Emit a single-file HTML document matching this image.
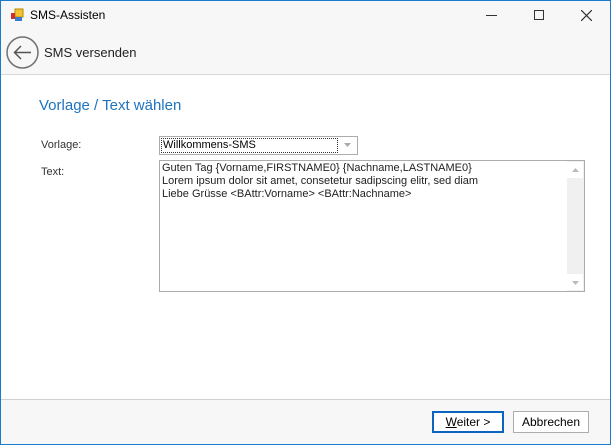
<!DOCTYPE html>
<html><head><style>
*{margin:0;padding:0;box-sizing:border-box}
body{width:611px;height:445px;background:#fff;font-family:"Liberation Sans",Tahoma,sans-serif;font-size:11px;color:#000;position:relative;overflow:hidden}
.win{position:absolute;left:0;top:0;width:611px;height:445px;border:1px solid #1a7acb;z-index:5;pointer-events:none}
.abs{position:absolute}
.title{left:1px;top:1px;width:609px;height:30px;background:#f7f7f7}
.hdr{left:1px;top:31px;width:609px;height:44px;background:#f7f7f7;border-bottom:1px solid #d8d8d8}
.foot{left:1px;top:399px;width:609px;height:45px;background:#f7f7f7;border-top:1px solid #cfcfcf}
.btn{height:22px;border:1px solid #adadad;background:#fff;text-align:center;line-height:20px;font-size:12px}
</style></head><body>
<div class="win"></div>
<div class="abs title"></div>
<svg class="abs" style="left:10px;top:8px" width="14" height="14"><rect x="5" y="1" width="8" height="8" fill="#f4c430" stroke="#b88a00"/><rect x="1" y="5" width="4" height="6" fill="#d03030"/><rect x="5" y="9" width="7" height="4" fill="#3a7ad0"/></svg>
<div class="abs" style="left:30px;top:8px;font-size:12px">SMS-Assisten</div>
<div class="abs" style="left:486px;top:15px;width:11px;height:1px;background:#333"></div>
<div class="abs" style="left:534px;top:10px;width:10px;height:10px;border:1px solid #333"></div>
<svg class="abs" style="left:581px;top:10px" width="11" height="11"><path d="M0 0L11 11M11 0L0 11" stroke="#333" stroke-width="1.2"/></svg>
<div class="abs hdr"></div>
<svg class="abs" style="left:6px;top:36px" width="33" height="33"><circle cx="16.5" cy="16.5" r="15.5" fill="none" stroke="#707070" stroke-width="1.5"/><path d="M25 16.5H9M15 10L8.5 16.5L15 23" fill="none" stroke="#555" stroke-width="1.5"/></svg>
<div class="abs" style="left:44px;top:45px;font-size:13px;color:#222">SMS versenden</div>
<div class="abs" style="left:39px;top:97px;font-size:15px;color:#1e73be">Vorlage / Text wählen</div>
<div class="abs" style="left:41px;top:139px;font-size:11px;color:#333">Vorlage:</div>
<div class="abs" style="left:41px;top:166px;font-size:11px;color:#333">Text:</div>
<div class="abs" style="left:159px;top:136px;width:199px;height:19px;border:1px solid #acacac;background:#fff"></div>
<div class="abs" style="left:161px;top:138px;width:177px;height:15px;border:1px dotted #333;font-size:11px;line-height:13px;padding-left:1px">Willkommens-SMS</div>
<svg class="abs" style="left:344px;top:143px" width="7" height="5"><path d="M0 0H7L3.5 4Z" fill="#aaa"/></svg>
<div class="abs" style="left:159px;top:160px;width:426px;height:132px;border:1px solid #acacac;background:#fff"></div>
<div class="abs" style="left:567px;top:161px;width:17px;height:130px;background:#f0f0f0"></div>
<div class="abs" style="left:567px;top:162px;width:16px;height:16px;background:#fff"></div>
<div class="abs" style="left:567px;top:274px;width:16px;height:16px;background:#fff"></div>
<svg class="abs" style="left:572px;top:168px" width="7" height="4"><path d="M0 4H7L3.5 0Z" fill="#bbb"/></svg>
<svg class="abs" style="left:572px;top:281px" width="7" height="4"><path d="M0 0H7L3.5 4Z" fill="#bbb"/></svg>
<div class="abs" style="left:162px;top:162px;font-size:11px;line-height:13px;color:#222">Guten Tag {Vorname,FIRSTNAME0} {Nachname,LASTNAME0}<br>Lorem ipsum dolor sit amet, consetetur sadipscing elitr, sed diam<br>Liebe Grüsse &lt;BAttr:Vorname&gt; &lt;BAttr:Nachname&gt;</div>
<div class="abs foot"></div>
<div class="abs btn" style="left:432px;top:411px;width:72px;border:2px solid #0a64c0;line-height:18px"><u>W</u>eiter &gt;</div>
<div class="abs btn" style="left:513px;top:411px;width:76px">Abbrechen</div>
</body></html>
